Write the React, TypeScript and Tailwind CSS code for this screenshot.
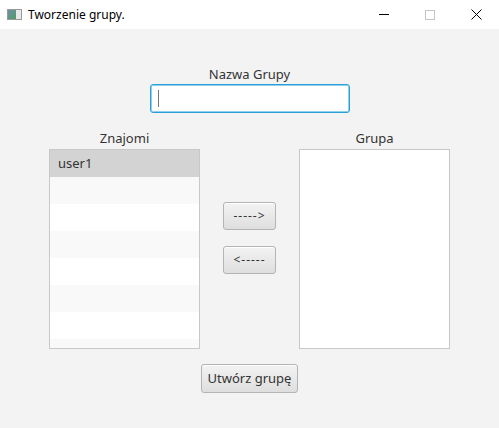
import React from "react";

const font = { fontFamily: '"Noto Sans", "Open Sans", sans-serif' };

function Btn({ children, className }: { children: React.ReactNode; className?: string }) {
  return (
    <div
      className={
        "flex items-center justify-center rounded-[3px] border border-[#b4b4b4] bg-gradient-to-b from-[#f3f3f3] to-[#dedede] text-[#333333] shadow-[inset_0_1px_0_#ffffff] " +
        (className ?? "")
      }
    >
      {children}
    </div>
  );
}

export default function App() {
  const rows = [0, 1, 2, 3, 4, 5, 6, 7];
  return (
    <div className="w-[499px] h-[428px] flex flex-col bg-[#f3f3f3] overflow-hidden" style={font}>
      {/* title bar */}
      <div className="h-[29px] bg-white flex items-center shrink-0">
        <div className="ml-[7px] w-[15px] h-[11px] border border-[#9a9a9a] flex bg-white">
          <div className="w-[8px] h-full bg-gradient-to-br from-[#6f8fa0] to-[#4f9a6a]" />
          <div className="flex-1 bg-[#e8e8e8]" />
        </div>
        <span className="ml-[6px] text-[12px] text-black leading-none">Tworzenie grupy.</span>
        <div className="flex-1" />
        <div className="w-[46px] h-[29px] flex items-center justify-center">
          <div className="w-[10px] h-px bg-black" />
        </div>
        <div className="w-[46px] h-[29px] flex items-center justify-center">
          <div className="w-[10px] h-[10px] border border-[#c4c4c4]" />
        </div>
        <div className="w-[46px] h-[29px] flex items-center justify-center">
          <svg width="11" height="11" viewBox="0 0 11 11">
            <path d="M0.5 0.5 L10.5 10.5 M10.5 0.5 L0.5 10.5" stroke="#000" strokeWidth="1" />
          </svg>
        </div>
      </div>

      {/* body */}
      <div className="flex flex-col items-center flex-1">
        <div className="mt-[35px] h-[20px] flex items-center text-[13px] text-[#333333] leading-none">Nazwa Grupy</div>
        <div className="h-[29px] w-[200px] rounded-[3px] border border-[#2a9fd6] bg-white shadow-[inset_0_0_0_1px_#8fd0ee] flex items-center pl-[7px]">
          <div className="w-px h-[17px] bg-[#777777]" />
        </div>

        <div className="mt-[17px] w-full flex pl-[49px]">
          <div className="w-[151px] flex flex-col">
            <div className="h-[19px] flex items-start justify-center text-[13px] text-[#333333] leading-[16px]">Znajomi</div>
            <div className="h-[200px] border border-[#c8c8c8] bg-white overflow-hidden">
              <div className="h-[27px] bg-[#d3d3d3] flex items-center pl-[8px] text-[13px] text-[#333333]">user1</div>
              {rows.map((i) => (
                <div key={i} className={"h-[27px] " + (i % 2 === 0 ? "bg-[#f9f9f9]" : "bg-white")} />
              ))}
            </div>
          </div>

          <div className="ml-[23px] flex flex-col pt-[72px] gap-[16px]">
            <Btn className="w-[53px] h-[28px] text-[12px] tracking-[1px]">-----&gt;</Btn>
            <Btn className="w-[53px] h-[28px] text-[12px] tracking-[1px]">&lt;-----</Btn>
          </div>

          <div className="ml-[23px] w-[151px] flex flex-col">
            <div className="h-[19px] flex items-start justify-center text-[13px] text-[#333333] leading-[16px]">Grupa</div>
            <div className="h-[200px] border border-[#c8c8c8] bg-white" />
          </div>
        </div>

        <Btn className="mt-[15px] w-[97px] h-[29px] text-[13px]">Utwórz grupę</Btn>
      </div>
    </div>
  );
}
